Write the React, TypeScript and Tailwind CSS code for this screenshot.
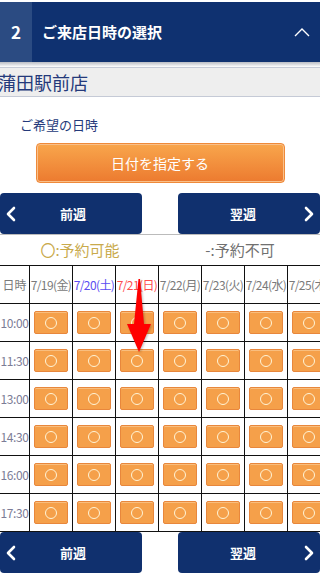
import React from 'react';

const days = [
  { label: '7/19(金)', color: 'text-[#7a7a7a]' },
  { label: '7/20(土)', color: 'text-[#5a4cf2]' },
  { label: '7/21(日)', color: 'text-[#ff4d4d]' },
  { label: '7/22(月)', color: 'text-[#7a7a7a]' },
  { label: '7/23(火)', color: 'text-[#7a7a7a]' },
  { label: '7/24(水)', color: 'text-[#7a7a7a]' },
  { label: '7/25(木)', color: 'text-[#7a7a7a]' },
];

const times = ['10:00', '11:30', '13:00', '14:30', '16:00', '17:30'];

function Chevron({ dir }: { dir: 'left' | 'right' }) {
  return (
    <svg width="10" height="16" viewBox="0 0 10 16" fill="none">
      <path
        d={dir === 'left' ? 'M8 2 L2 8 L8 14' : 'M2 2 L8 8 L2 14'}
        stroke="white"
        strokeWidth="2.6"
        strokeLinecap="round"
        strokeLinejoin="round"
      />
    </svg>
  );
}

function WeekNav() {
  return (
    <div className="flex justify-between">
      <button className="w-[142px] h-[41px] bg-[#10306e] rounded-[4px] flex items-center text-white text-[13px] font-bold">
        <span className="ml-[6px] flex"><Chevron dir="left" /></span>
        <span className="ml-[44px]">前週</span>
      </button>
      <button className="w-[142px] h-[41px] bg-[#10306e] rounded-[4px] flex items-center justify-end text-white text-[13px] font-bold">
        <span className="mr-[48px]">翌週</span>
        <span className="mr-[6px] flex"><Chevron dir="right" /></span>
      </button>
    </div>
  );
}

function Slot() {
  return (
    <div className="w-[34px] h-[23px] bg-[#f5a04a] border border-[#e8873c] rounded-[2px] shadow-[inset_0_1px_0_#f9be7e] flex items-center justify-center">
      <span className="w-[12px] h-[12px] rounded-full border border-[#fff4d6]" />
    </div>
  );
}

export default function App() {
  return (
    <div className="w-[320px] h-[578px] overflow-hidden bg-white font-['Noto_Sans_CJK_JP',sans-serif]">
      {/* Section header */}
      <div className="mt-[2px] h-[60px] flex items-center bg-[#0f3170]">
        <div className="w-[32px] h-full bg-[#2b4b82] flex items-center justify-center text-white text-[17px] font-bold">2</div>
        <h2 className="ml-[10px] text-white text-[15px] font-bold flex-1">ご来店日時の選択</h2>
        <svg width="16" height="9" viewBox="0 0 16 9" className="mr-[10px]" fill="none">
          <path d="M1 8 L8 1 L15 8" stroke="white" strokeWidth="1.4" />
        </svg>
      </div>
      <div className="h-[5px] bg-gradient-to-b from-[#b9bcc4] to-white" />

      {/* Store */}
      <div className="h-[30px] bg-[#eeeeee] border-y border-[#c5cad6] flex items-center">
        <span className="-ml-[2px] text-[18px] text-[#24397a]">蒲田駅前店</span>
      </div>

      <p className="mt-[20px] ml-[20px] text-[13px] text-[#24397a] leading-[16px]">ご希望の日時</p>

      <div className="mt-[10px] flex justify-center">
        <button className="w-[249px] h-[40px] rounded-[4px] border border-[#ef8a3a] bg-gradient-to-b from-[#f8a64c] to-[#ec7a2f] shadow-[inset_0_0_0_1px_#f9c08a] text-white text-[14px]">
          日付を指定する
        </button>
      </div>

      <div className="mt-[10px]">
        <WeekNav />
      </div>

      <div className="relative">
        {/* Legend */}
        <div className="h-[31px] border-t border-[#bbbbbb] flex items-center text-[15px]">
          <span className="w-1/2 text-center text-[#c9aa4c]">〇:予約可能</span>
          <span className="w-1/2 text-center text-[#707070]">-:予約不可</span>
        </div>

        {/* Calendar table */}
        <div className="w-[331px] border-t border-[#111111]">
          <div className="flex h-[38px] border-b border-[#111111]">
            <div className="w-[30px] shrink-0 border-r border-[#111111] flex items-center justify-center text-[12px] text-[#7a7a7a]">日時</div>
            {days.map((d) => (
              <div
                key={d.label}
                className={`w-[43px] shrink-0 border-r border-[#111111] flex items-center justify-center text-[12px] whitespace-nowrap tracking-[-0.6px] ${d.color}`}
              >
                {d.label}
              </div>
            ))}
          </div>
          {times.map((t) => (
            <div key={t} className="flex h-[38px] border-b border-[#111111]">
              <div className="w-[30px] shrink-0 border-r border-[#111111] flex items-center justify-center text-[12px] text-[#7c7c96] tracking-[-0.4px]">{t}</div>
              {days.map((d) => (
                <div key={d.label} className="w-[43px] shrink-0 border-r border-[#111111] flex items-center justify-center">
                  <Slot />
                </div>
              ))}
            </div>
          ))}
        </div>

        {/* Pointer arrow */}
        <svg
          width="26"
          height="74"
          viewBox="0 0 26 74"
          className="absolute left-[126px] top-[45px] drop-shadow-[1px_1px_1px_rgba(0,0,0,0.25)]"
        >
          <polygon points="12.5,0 14,0 18,45 25,45 13,73 1,45 8,45" fill="#ff0000" />
        </svg>
      </div>

      <WeekNav />
    </div>
  );
}
